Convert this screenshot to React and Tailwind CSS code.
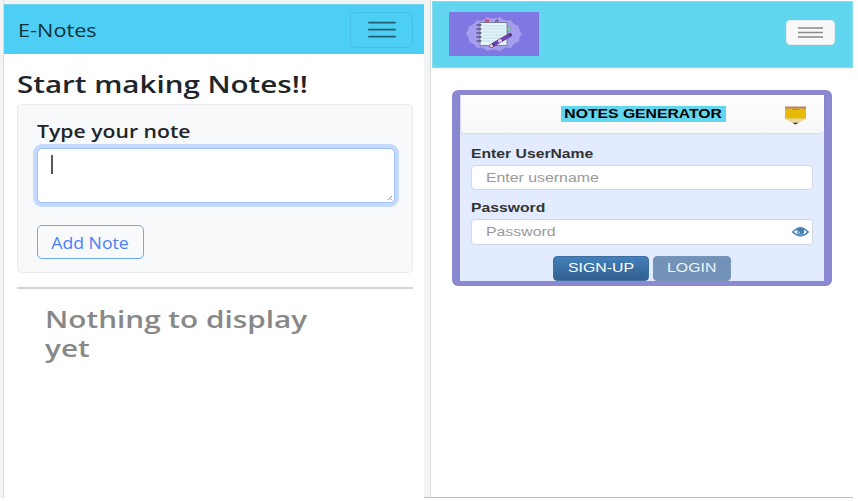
import React from 'react';

const wide = 'inline-block whitespace-nowrap';

function NotesPanel() {
  return (
    <section className="w-[420px] h-[494px] bg-white font-['Open_Sans','Noto_Sans',sans-serif] text-[#212529]">
      <nav className="flex h-[50px] items-center justify-between bg-[#4dcef4] border-t border-[#75d5ef] pl-[14px] pr-[11px]">
        <span className={`${wide} origin-left scale-x-[1.24] text-[17.5px] leading-[26px] text-[#12323b] pt-px`}>E-Notes</span>
        <button aria-label="Menu" className="flex h-[36px] w-[63px] items-center justify-center rounded-[5px] border border-[#47bfe2]">
          <svg width="28" height="18" viewBox="0 0 28 18" stroke="#23606f" strokeWidth="1.8" strokeLinecap="round">
            <path d="M1 1.7H27M1 8.7H27M1 15.7H27" />
          </svg>
        </button>
      </nav>
      <main className="pl-[13px] pr-[11px] pt-[16px]">
        <h1 className="h-[34px] text-[23.5px] leading-[29px] font-semibold">
          <span className={`${wide} origin-left scale-x-[1.257]`}>Start making Notes!!</span>
        </h1>
        <div className="h-[169px] rounded-[5px] border border-[#e9ebee] bg-[#f8f9fb] px-[19px] pt-[15px]">
          <h2 className="h-[28px] text-[17.5px] leading-[22px] font-semibold">
            <span className={`${wide} origin-left scale-x-[1.21]`}>Type your note</span>
          </h2>
          <div className="flex h-[55px] w-[358px] items-end justify-between rounded-[5px] border border-[#9ec4fb] bg-white pl-[13px] pr-[2px] pb-[2px] shadow-[0_0_0_4px_#c4d9fc]">
            <span className="mb-[26px] h-[19px] w-[2px] bg-[#55595e]" />
            <svg width="4" height="4" viewBox="0 0 4 4" stroke="#777" strokeWidth=".8"><path d="M0 4L4 0M2.5 4L4 2.5" /></svg>
          </div>
          <button className="mt-[22px] flex h-[34px] w-[107px] items-center justify-center rounded-[5px] border border-[#6ea4fb] pt-[3px] text-[15.5px] text-[#4a80fb]">
            <span className={`${wide} scale-x-[1.14]`}>Add Note</span>
          </button>
        </div>
        <hr className="mt-[14px] h-[2px] border-0 bg-[#d3d3d4]" />
        <h1 className="pl-[28px] pt-[16px] text-[23.5px] leading-[29px] font-semibold text-[#888]">
          <span className={`${wide} origin-left scale-x-[1.264]`}>Nothing to display<br />yet</span>
        </h1>
      </main>
    </section>
  );
}

function NotebookLogo() {
  return (
    <svg width="90" height="44" viewBox="0 0 90 44" className="bg-[#8078e2]">
      <path d="M17 22Q19 18 20 14Q25 13 28 8Q34 10 38 5Q45 8 51 5Q56 10 62 8Q64 13 70 14Q69 18 73 22Q69 26 70 30Q64 31 62 36Q56 34 51 39Q45 36 38 39Q34 34 28 36Q25 31 20 30Q21 26 17 22Z" fill="#a79dee" />
      <path d="M36 7.5h4v3.5h-4z" fill="#d64e5e" />
      <path d="M46 11.5q1-5 3-3l-1 3" fill="none" stroke="#4e4a75" />
      <path d="M58 14l4 3-4 3z" fill="#8ae59b" stroke="#408c70" strokeWidth=".5" />
      <path d="M31 10.5h27v23H31z" fill="#e3f4fa" stroke="#686b8c" strokeWidth=".8" />
      <path d="M34 14h22M34 17h22M34 20h22M34 23h22M34 26h22M34 29h15" stroke="#b9d8e5" strokeWidth=".8" />
      <path d="M28 13h4M28 17h4M28 21h4M28 25h4M28 29h4" stroke="#5b5578" strokeWidth="1.5" strokeLinecap="round" />
      <path d="M42 34L61 23" stroke="#4b3876" strokeWidth="3.8" strokeLinecap="round" />
      <path d="M45 32.3L60 23.6" stroke="#7545c6" strokeWidth="2.7" />
      <path d="M41 34.6L43.5 33.1M49.5 29.7L52.5 27.9" stroke="#f3cbdc" strokeWidth="2.9" />
    </svg>
  );
}

function Eye() {
  return (
    <svg width="17" height="10" viewBox="0 0 17 10">
      <path d="M.8 5Q8.5-3 16.2 5Q8.5 12.5.8 5Z" fill="white" stroke="#4782b7" strokeWidth="1.6" />
      <circle cx="8.5" cy="4" r="3.8" fill="#4782b7" />
      <path d="M5.8 4Q6 5.5 7.8 5.7" fill="none" stroke="white" strokeWidth=".9" />
    </svg>
  );
}

function LoginPanel() {
  return (
    <section className="h-[497px] w-[423px] border-l border-[#d9dcdb] bg-white pl-px pt-px font-['Liberation_Sans',Arial,sans-serif]">
      <nav className="flex h-[67px] w-[421px] items-start justify-between border border-[#83dcec] bg-[#62d6ef] pl-[16px] pr-[17px] shadow-[0_1px_3px_#0001]">
        <div className="mt-[10px]"><NotebookLogo /></div>
        <button aria-label="Menu" className="mt-[18px] flex h-[25px] w-[49px] items-center justify-center rounded-[4px] border border-[#e0eef2] bg-[#f8f8f8]">
          <svg width="25" height="12" viewBox="0 0 25 12" stroke="#888" strokeWidth="1.6"><path d="M0 1H25M0 5.5H25M0 10H25" /></svg>
        </button>
      </nav>
      <form className="ml-[20px] mt-[22px] h-[196px] w-[380px] rounded-[6px] border-x-[8px] border-y-[5px] border-[#8988d0] bg-[#e2ebff]">
        <header className="flex h-[38px] items-center justify-between rounded-b-[4px] border-l border-[#d8d9ef] bg-linear-to-b from-white to-[#f7f7f7] pl-[100px] pr-[18px] shadow-[0_1px_2px_#0001]">
          <h2 className="flex h-[16px] w-[165px] items-center justify-center bg-[#62d6ef] text-[12px] font-bold text-black">
            <span className={`${wide} scale-x-[1.31]`}>NOTES GENERATOR</span>
          </h2>
          <svg width="21" height="19" viewBox="0 0 21 19" className="mt-[2px]">
            <path d="M0 12H21V13L10.5 18.5L0 13Z" fill="#ead6a0" />
            <path d="M7.5 16.7H13.5L10.5 18.5Z" fill="#292929" />
            <path d="M0 1H21V12.5H0Z" fill="#e8ba09" />
            <path d="M0 .5H21V2.5H0Z" fill="#b88078" />
            <path d="M7 3.5H14" stroke="#c59405" />
          </svg>
        </header>
        <div className="px-[11px] pt-[14px]">
          <label className="block h-[18px] text-[12px] leading-[15px] font-bold text-[#333]"><span className={`${wide} origin-left scale-x-[1.31]`}>Enter UserName</span></label>
          <div className="flex h-[25px] w-[342px] items-center rounded-[4px] border border-[#d3d9e3] bg-white pl-[14px] text-[12px] text-[#999]"><span className={`${wide} origin-left scale-x-[1.32]`}>Enter username</span></div>
          <label className="mt-[11px] block h-[18px] text-[12px] leading-[15px] font-bold text-[#333]"><span className={`${wide} origin-left scale-x-[1.31]`}>Password</span></label>
          <div className="flex h-[26px] w-[342px] items-center justify-between rounded-[4px] border border-[#d3d9e3] bg-white pl-[14px] pr-[3px] text-[12px] text-[#999]"><span className={`${wide} origin-left scale-x-[1.32]`}>Password</span><Eye /></div>
        </div>
        <div className="flex gap-[4px] pl-[93px] pt-[11px] text-[12px] text-white">
          <button type="button" className="flex h-[25px] w-[96px] items-center justify-center rounded-[4px] border border-[#3c6e9f] bg-linear-to-b from-[#4380bb] to-[#335f8e] pb-px"><span className={`${wide} scale-x-[1.32]`}>SIGN-UP</span></button>
          <button type="button" className="flex h-[25px] w-[78px] items-center justify-center rounded-[4px] border border-[#7796bb] bg-[#7392b7] pb-px text-[#f0f4fa]"><span className={`${wide} scale-x-[1.32]`}>LOGIN</span></button>
        </div>
      </form>
    </section>
  );
}

export default function App() {
  return (
    <div className="h-[501px] w-[858px] overflow-hidden bg-white">
      <div className="flex h-[498px] w-[853px] bg-[#f2f3f3]">
        <div className="w-[4px] border-r border-[#dcdfde]" />
        <div className="pt-[4px]"><NotesPanel /></div>
        <div className="flex w-[429px] flex-col border-b border-[#bdbfbe] pl-[6px]"><LoginPanel /></div>
      </div>
    </div>
  );
}
